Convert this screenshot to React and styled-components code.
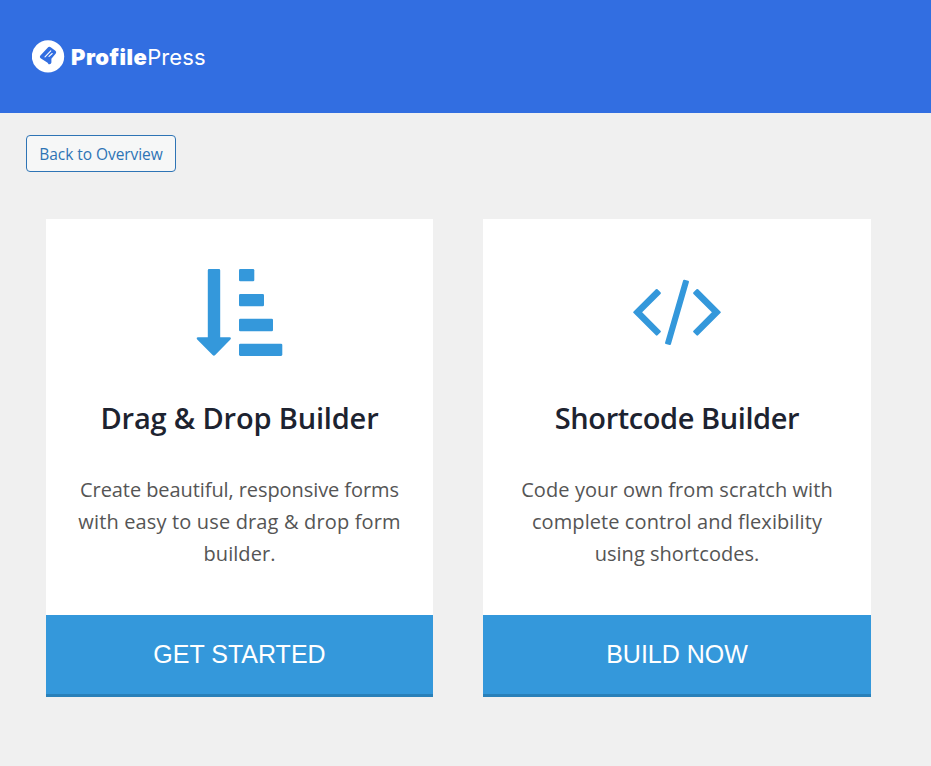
import React from "react";
import styled, { createGlobalStyle } from "styled-components";

const GlobalStyle = createGlobalStyle`
  * {
    box-sizing: border-box;
  }

  body {
    margin: 0;
    background: #f0f0f0;
    font-family: "Open Sans", "Noto Sans", sans-serif;
  }
`;

const Header = styled.header`
  display: flex;
  align-items: center;
  height: 113px;
  padding-left: 32px;
  background: #326ee1;
`;

const Logo = styled.div`
  display: flex;
  align-items: center;
  gap: 5px;
`;

const LogoText = styled.span`
  padding-top: 1px;
  color: #fff;
  font-family: Inter, sans-serif;
  font-size: 22px;
  font-weight: 400;
  line-height: 33px;
  letter-spacing: 0.1px;
  white-space: nowrap;

  b {
    margin-left: 1px;
    font-weight: 900;
    letter-spacing: 0.45px;
  }
`;

const Main = styled.main`
  padding: 22px 26px 0;
`;

const BackButton = styled.button`
  display: block;
  width: 150px;
  height: 37px;
  padding: 1px 0 0;
  border: 1px solid #2e74b5;
  border-radius: 4px;
  background: #f6f7f7;
  color: #2e74b5;
  font-family: inherit;
  font-size: 15.5px;
  letter-spacing: -0.05px;
  white-space: nowrap;
`;

const Cards = styled.div`
  display: grid;
  grid-template-columns: 387px 388px;
  gap: 50px;
  margin: 47px 0 0 20px;
`;

const CardWrapper = styled.section`
  display: flex;
  flex-direction: column;
  height: 478px;
  background: #fff;
  text-align: center;
`;

const CardIcon = styled.div`
  display: flex;
  justify-content: center;
  padding-top: 48px;
  height: 176px;
`;

const CardTitle = styled.h2`
  margin: 0;
  color: #1d2330;
  font-size: 29px;
  font-weight: 600;
  line-height: 46px;
  letter-spacing: ${(props) => props.$spacing};
  white-space: nowrap;
`;

const CardText = styled.p`
  margin: 33px 0 0;
  color: #555;
  font-size: 20px;
  line-height: 32px;
`;

const Line = styled.span`
  display: block;
  letter-spacing: ${(props) => props.$spacing};
  white-space: nowrap;
`;

const CardButton = styled.button`
  height: 82px;
  margin-top: auto;
  padding: 0 0 1px;
  border: 0;
  border-bottom: 3px solid #2980b9;
  background: #3498db;
  color: #fff;
  font-family: "Liberation Sans", Arial, sans-serif;
  font-size: 25px;
  text-transform: uppercase;
`;

const LogoMark = () => (
  <svg width="33" height="33" viewBox="0 0 33 33">
    <circle cx="16" cy="16.4" r="16.2" fill="#fff" />
    <path
      d="M8.2 15.8 15.4 7.9Q17.2 6 19 7.4L23.4 10.7Q24.9 12 23.8 13.4L19.4 18.8V22.6Q19 24.8 16.6 24.2L15.6 22.8 8.6 18.2Q7.2 17.2 8.2 15.8Z"
      fill="#326ee1"
    />
    <path
      d="M13 16.8 18.8 10.8M17 16.4 20.2 13.5"
      stroke="#fff"
      strokeWidth="1.1"
      strokeLinecap="round"
    />
  </svg>
);

const SortIcon = () => (
  <svg width="89" height="90" viewBox="0 0 89 90" fill="#3498db">
    <path d="M14 2H24Q25.2 2 25.2 3.2V70.3H34.6Q36.8 70.5 35.4 72.4L20.2 88Q18.9 89.3 17.6 88L2.2 72.4Q0.8 70.5 3 70.3H12.8V3.2Q12.8 2 14 2Z" />
    <rect x="44" y="2" width="15.3" height="12.2" rx="1.3" />
    <rect x="44" y="27" width="25" height="12.2" rx="1.3" />
    <rect x="44" y="51.8" width="34" height="12.4" rx="1.3" />
    <rect x="44" y="76.7" width="43.3" height="12.2" rx="1.3" />
  </svg>
);

const CodeIcon = () => (
  <svg width="88" height="90" viewBox="0 0 88 90">
    <path
      d="M1.4 45.3 23.7 23.1 26.7 26.1 7.6 45.3 26.7 64.5 23.7 67.5ZM86.6 45.3 64.3 23.1 61.3 26.1 80.4 45.3 61.3 64.5 64.3 67.5ZM51.2 13.9 54.8 14.9 36.9 76.8 33.2 75.9Z"
      fill="#3498db"
      stroke="#3498db"
      strokeWidth="2.3"
      strokeLinejoin="round"
    />
  </svg>
);

const cards = [
  {
    icon: <SortIcon />,
    title: "Drag & Drop Builder",
    titleSpacing: "-0.17px",
    lines: [
      ["Create beautiful, responsive forms", "-0.08px"],
      ["with easy to use drag & drop form", "0.15px"],
      ["builder.", "0.05px"],
    ],
    button: "Get Started",
  },
  {
    icon: <CodeIcon />,
    title: "Shortcode Builder",
    titleSpacing: "-0.42px",
    lines: [
      ["Code your own from scratch with", "0.08px"],
      ["complete control and flexibility", "0.08px"],
      ["using shortcodes.", "0.03px"],
    ],
    button: "Build Now",
  },
];

const Card = ({ icon, title, titleSpacing, lines, button }) => {
  return (
    <CardWrapper>
      <CardIcon>{icon}</CardIcon>
      <CardTitle $spacing={titleSpacing}>{title}</CardTitle>
      <CardText>
        {lines.map(([text, spacing]) => (
          <Line key={text} $spacing={spacing}>
            {text}
          </Line>
        ))}
      </CardText>
      <CardButton>{button}</CardButton>
    </CardWrapper>
  );
};

const App = () => {
  return (
    <>
      <GlobalStyle />
      <Header>
        <Logo>
          <LogoMark />
          <LogoText>
            <b>Profile</b>Press
          </LogoText>
        </Logo>
      </Header>
      <Main>
        <BackButton>Back to Overview</BackButton>
        <Cards>
          {cards.map((card) => (
            <Card key={card.title} {...card} />
          ))}
        </Cards>
      </Main>
    </>
  );
};

export default App;
